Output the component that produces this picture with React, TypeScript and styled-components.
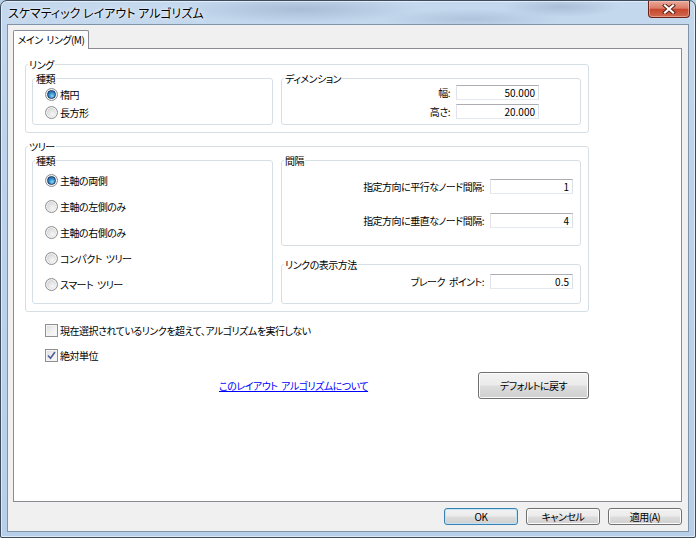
import React, { useState } from "react";
import styled, { createGlobalStyle, css } from "styled-components";

const GlobalStyle = createGlobalStyle`
  html, body {
    margin: 0;
    padding: 0;
    width: 696px;
    height: 538px;
    overflow: hidden;
    background: #b9cfe6;
  }
  * {
    box-sizing: border-box;
  }
`;

const uiFont = css`
  font-family: "Noto Sans CJK JP", "Noto Sans", sans-serif;
  font-feature-settings: "palt";
  font-size: 10px;
  letter-spacing: -0.5px;
  word-spacing: 2px;
  line-height: 13px;
  color: #000;
`;

const Window = styled.div`
  ${uiFont};
  width: 696px;
  height: 538px;
  display: flex;
  flex-direction: column;
  border: 1px solid #3d4d5e;
  border-radius: 7px 7px 2px 2px;
  box-shadow: inset 0 0 0 1px rgba(255, 255, 255, 0.55);
  background:
    radial-gradient(ellipse 120px 14px at 300px 8px, rgba(120, 140, 170, 0.35), transparent),
    radial-gradient(ellipse 90px 10px at 470px 18px, rgba(130, 150, 180, 0.3), transparent),
    radial-gradient(ellipse 60px 10px at 560px 6px, rgba(110, 130, 160, 0.3), transparent),
    linear-gradient(180deg, #c4d8ee 0%, #bcd3eb 30%, #b7cfe8 100%);
  padding: 0 6px 5px 6px;
`;

const TitleBar = styled.div`
  height: 23px;
  display: flex;
  align-items: flex-start;
  justify-content: space-between;
  flex-shrink: 0;
`;

const Title = styled.div`
  padding: 4px 0 0 1px;
  font-size: 12px;
  letter-spacing: 0;
  word-spacing: 0;
  line-height: 15px;
  text-shadow: 0 0 6px rgba(255, 255, 255, 0.9), 0 0 2px rgba(255, 255, 255, 0.9);
`;

const CloseButton = styled.div`
  width: 42px;
  height: 17px;
  margin-right: -1px;
  display: flex;
  align-items: center;
  justify-content: center;
  border: 1px solid #6b2317;
  border-top: none;
  border-radius: 0 0 4px 4px;
  background: linear-gradient(180deg, #e9a99a 0%, #dc7c68 45%, #c6472d 52%, #d06a4e 100%);
  box-shadow: inset 0 0 0 1px rgba(255, 210, 200, 0.45);
`;

const Client = styled.div`
  flex: 1;
  display: flex;
  flex-direction: column;
  border: 1px solid #7f93a9;
  background: #f0f0f0;
  padding: 5px 6px 6px 5px;
`;

const TabStrip = styled.div`
  display: flex;
  height: 18px;
  flex-shrink: 0;
`;

const Tab = styled.div`
  position: relative;
  z-index: 1;
  width: 76px;
  height: 19px;
  border: 1px solid #898c95;
  border-bottom: none;
  border-radius: 2px 2px 0 0;
  background: #fff;
  display: flex;
  align-items: center;
  justify-content: center;
  white-space: nowrap;
  padding-bottom: 1px;
`;

const TabPanel = styled.div`
  flex: 1;
  border: 1px solid #898c95;
  background: #fff;
  padding: 9px 0 0 11px;
  display: flex;
  flex-direction: column;
`;

const Group = styled.fieldset<{ $width?: number; $grow?: boolean }>`
  margin: 0;
  padding: 0;
  min-width: 0;
  border: 1px solid #d5dfe5;
  border-radius: 3px;
  width: ${(p) => (p.$width ? `${p.$width}px` : "auto")};
  flex: ${(p) => (p.$grow ? 1 : "none")};
  display: flex;
  flex-direction: column;
`;

const Legend = styled.legend`
  margin-left: 2px;
  padding: 0 1px;
  line-height: 13px;
`;

const OuterBody = styled.div`
  padding: 0 7px 7px 6px;
`;

const TwoCols = styled.div<{ $top: number }>`
  display: grid;
  grid-template-columns: 241px 300px;
  column-gap: 8px;
  margin-top: ${(p) => p.$top}px;
`;

const RightStack = styled.div`
  display: flex;
  flex-direction: column;
  gap: 12px;
`;

const GroupGap = styled.div`
  height: 7px;
  flex-shrink: 0;
`;

const RadioList = styled.div<{ $row: number; $bottom: number }>`
  display: flex;
  flex-direction: column;
  padding: 0 0 ${(p) => p.$bottom}px 12px;

  & > label {
    height: ${(p) => p.$row}px;
  }
`;

const OptionLabel = styled.label`
  display: flex;
  align-items: center;
  gap: 2px;
  cursor: default;
  white-space: nowrap;
`;

const RadioMark = styled.span<{ $on: boolean }>`
  width: 13px;
  height: 13px;
  border-radius: 50%;
  border: 1px solid #8e8f8f;
  background: radial-gradient(circle at 60% 65%, #f7f7f7 0%, #dcdcdc 55%, #c3c3c3 100%);
  box-shadow: inset 0 0 0 1px #f4f4f4;
  display: flex;
  align-items: center;
  justify-content: center;
  flex-shrink: 0;

  &::after {
    content: "";
    display: ${(p) => (p.$on ? "block" : "none")};
    width: 7px;
    height: 7px;
    border-radius: 50%;
    background: radial-gradient(circle at 60% 70%, #8fd6f8 0%, #3591cf 45%, #1b4f86 100%);
    border: 1px solid #1d3c68;
  }
`;

const CheckMark = styled.span`
  width: 13px;
  height: 13px;
  border: 1px solid #8e8f8f;
  background: linear-gradient(135deg, #dcdcdc 0%, #f3f3f3 60%, #fbfbfb 100%);
  box-shadow: inset 0 0 0 1px #f4f4f4;
  display: flex;
  align-items: center;
  justify-content: center;
  flex-shrink: 0;
`;

const Fields = styled.div<{ $top: number; $gap: number; $row: number; $bottom: number; $right: number }>`
  display: flex;
  flex-direction: column;
  gap: ${(p) => p.$gap}px;
  padding: ${(p) => p.$top}px ${(p) => p.$right}px ${(p) => p.$bottom}px 0;

  & > div {
    height: ${(p) => p.$row}px;
  }
`;

const FieldRow = styled.div`
  display: flex;
  align-items: center;
  justify-content: flex-end;
  gap: 6px;
`;

const TextBox = styled.input`
  ${uiFont};
  letter-spacing: 0;
  width: 83px;
  height: 15px;
  padding: 0 3px 0 0;
  margin: 0;
  text-align: right;
  border: 1px solid;
  border-color: #abadb3 #dbdfe6 #e3e9ef #e2e3ea;
  background: #fff;
  outline: none;
`;

const CheckList = styled.div`
  display: flex;
  flex-direction: column;
  gap: 7px;
  margin-top: 9px;
  padding-left: 20px;

  & > label {
    height: 18px;
  }
`;

const LinkRow = styled.div`
  width: 564px;
  margin-top: 8px;
  display: flex;
  align-items: center;
  padding-left: 194px;
`;

const AboutLink = styled.a`
  color: #0000ff;
  text-decoration: underline;
  cursor: pointer;
`;

const Button = styled.button<{ $w: number; $h: number; $default?: boolean }>`
  ${uiFont};
  width: ${(p) => p.$w}px;
  height: ${(p) => p.$h}px;
  padding: 0;
  margin: 0;
  border: 1px solid ${(p) => (p.$default ? "#3c7fb1" : "#707070")};
  border-radius: 3px;
  background: linear-gradient(180deg, #f2f2f2 0%, #ebebeb 48%, #dddddd 52%, #cfcfcf 100%);
  box-shadow: inset 0 0 0 1px ${(p) => (p.$default ? "#bfe4f8" : "#fcfcfc")};
  cursor: default;
`;

const SideButton = styled(Button)`
  margin-left: auto;
`;

const ButtonBar = styled.div`
  display: flex;
  justify-content: flex-end;
  gap: 8px;
  margin-top: 6px;
  flex-shrink: 0;
`;

const treeOptions = [
  "主軸の両側",
  "主軸の左側のみ",
  "主軸の右側のみ",
  "コンパクト ツリー",
  "スマート ツリー",
];

const CloseGlyph = () => (
  <svg width="14" height="10" viewBox="0 0 14 10">
    <path d="M3 1.5 L11 8.5 M11 1.5 L3 8.5" stroke="#5a1b10" strokeWidth="4" strokeLinecap="square" />
    <path d="M3 1.5 L11 8.5 M11 1.5 L3 8.5" stroke="#fff" strokeWidth="2.2" strokeLinecap="square" />
  </svg>
);

const Tick = () => (
  <svg width="9" height="9" viewBox="0 0 9 9">
    <path d="M1 4.5 L3.5 7.2 L8 1" fill="none" stroke="#4a5f97" strokeWidth="1.6" />
  </svg>
);

const App: React.FC = () => {
  const [ringShape, setRingShape] = useState(0);
  const [treeType, setTreeType] = useState(0);
  const [noCross, setNoCross] = useState(false);
  const [absolute, setAbsolute] = useState(true);

  return (
    <>
      <GlobalStyle />
      <Window>
        <TitleBar>
          <Title>スケマティック レイアウト アルゴリズム</Title>
          <CloseButton>
            <CloseGlyph />
          </CloseButton>
        </TitleBar>
        <Client>
          <TabStrip>
            <Tab>メイン リング(M)</Tab>
          </TabStrip>
          <TabPanel>
            <Group $width={564}>
              <Legend>リング</Legend>
              <OuterBody>
                <TwoCols $top={1}>
                  <Group>
                    <Legend>種類</Legend>
                    <RadioList $row={18} $bottom={2}>
                      {["楕円", "長方形"].map((t, i) => (
                        <OptionLabel key={t} onClick={() => setRingShape(i)}>
                          <RadioMark $on={ringShape === i} />
                          {t}
                        </OptionLabel>
                      ))}
                    </RadioList>
                  </Group>
                  <Group>
                    <Legend>ディメンション</Legend>
                    <Fields $top={0} $gap={4} $row={15} $bottom={5} $right={41}>
                      <FieldRow>
                        幅:
                        <TextBox defaultValue="50.000" />
                      </FieldRow>
                      <FieldRow>
                        高さ:
                        <TextBox defaultValue="20.000" />
                      </FieldRow>
                    </Fields>
                  </Group>
                </TwoCols>
              </OuterBody>
            </Group>

            <GroupGap />

            <Group $width={564}>
              <Legend>ツリー</Legend>
              <OuterBody>
                <TwoCols $top={1}>
                  <Group>
                    <Legend>種類</Legend>
                    <RadioList $row={26} $bottom={6}>
                      {treeOptions.map((t, i) => (
                        <OptionLabel key={t} onClick={() => setTreeType(i)}>
                          <RadioMark $on={treeType === i} />
                          {t}
                        </OptionLabel>
                      ))}
                    </RadioList>
                  </Group>
                  <RightStack>
                    <Group $grow>
                      <Legend>間隔</Legend>
                      <Fields $top={9} $gap={14} $row={20} $bottom={0} $right={7}>
                        <FieldRow>
                          指定方向に平行なノード間隔:
                          <TextBox defaultValue="1" />
                        </FieldRow>
                        <FieldRow>
                          指定方向に垂直なノード間隔:
                          <TextBox defaultValue="4" />
                        </FieldRow>
                      </Fields>
                    </Group>
                    <Group>
                      <Legend>リンクの表示方法</Legend>
                      <Fields $top={0} $gap={0} $row={20} $bottom={12} $right={7}>
                        <FieldRow>
                          ブレーク ポイント:
                          <TextBox defaultValue="0.5" />
                        </FieldRow>
                      </Fields>
                    </Group>
                  </RightStack>
                </TwoCols>
              </OuterBody>
            </Group>

            <CheckList>
              <OptionLabel onClick={() => setNoCross(!noCross)}>
                <CheckMark>{noCross && <Tick />}</CheckMark>
                現在選択されているリンクを超えて、アルゴリズムを実行しない
              </OptionLabel>
              <OptionLabel onClick={() => setAbsolute(!absolute)}>
                <CheckMark>{absolute && <Tick />}</CheckMark>
                絶対単位
              </OptionLabel>
            </CheckList>

            <LinkRow>
              <AboutLink>このレイアウト アルゴリズムについて</AboutLink>
              <SideButton $w={111} $h={27}>デフォルトに戻す</SideButton>
            </LinkRow>
          </TabPanel>
          <ButtonBar>
            <Button $w={74} $h={17} $default>OK</Button>
            <Button $w={74} $h={17}>キャンセル</Button>
            <Button $w={74} $h={17}>適用(A)</Button>
          </ButtonBar>
        </Client>
      </Window>
    </>
  );
};

export default App;
